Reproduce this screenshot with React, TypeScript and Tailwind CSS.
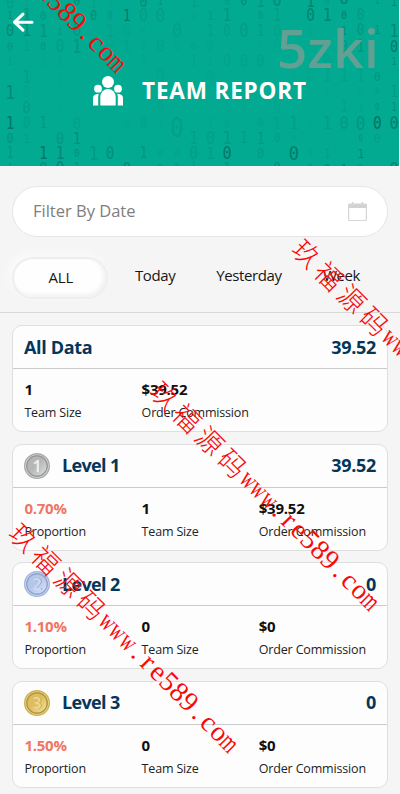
type Digit = [col: number, y: number, char: string, size: number, opacity: number];
type Stat = { value: string; label: string; accent?: boolean };
type Level = { title: string; total: string; medal?: 1 | 2 | 3; stats: Stat[] };

const DIGITS: Digit[] = [
  [0, 2, "0", 16, 0.16], [1, 2, "1", 11, 0.1], [2, 2, "1", 13, 0.05], [3, 2, "1", 14, 0.06], [4, 0, "0", 13, 0.4], [5, 2, "1", 16, 0.1], [6, 3, "1", 12, 0.06], [8, 1, "0", 16, 0.36], [9, 1, "1", 11, 0.25], [11, 1, "1", 17, 0.12],
  [13, 1, "0", 10, 0.2], [14, 0, "0", 14, 0.4], [15, 1, "1", 17, 0.25], [16, 0, "0", 18, 0.4], [18, 1, "1", 17, 0.5], [19, 1, "0", 11, 0.16], [20, -3, "0", 20, 0.5], [22, 1, "1", 9, 0.3], [23, 1, "1", 13, 0.4],
  [0, 15, "1", 11, 0.3], [1, 15, "1", 18, 0.3], [2, 15, "0", 13, 0.25], [3, 15, "1", 14, 0.25], [5, 15, "0", 14, 0.36], [6, 15, "0", 10, 0.22], [7, 15, "1", 16, 0.6], [8, 15, "0", 18, 0.16], [9, 15, "0", 20, 0.15], [11, 15, "0", 11, 0.05],
  [12, 15, "1", 13, 0.15], [13, 15, "1", 18, 0.25], [15, 15, "0", 10, 0.27], [16, 15, "1", 18, 0.14], [18, 15, "0", 17, 0.5], [19, 15, "1", 18, 0.5], [20, 15, "0", 11, 0.6], [21, 15, "0", 15, 0.2],
  [0, 30, "0", 16, 0.43], [1, 30, "1", 18, 0.38], [2, 31, "1", 17, 0.28], [3, 31, "1", 11, 0.2], [4, 30, "0", 18, 0.2], [6, 31, "1", 17, 0.1], [7, 31, "0", 15, 0.07], [8, 31, "0", 8, 0.08], [10, 30, "0", 19, 0.12],
  [12, 31, "1", 15, 0.1], [13, 31, "0", 15, 0.12], [14, 30, "0", 19, 0.15], [15, 31, "1", 15, 0.15], [16, 31, "0", 15, 0.1], [18, 31, "1", 9, 0.1], [20, 31, "1", 12, 0.35], [21, 30, "0", 15, 0.25], [22, 30, "1", 12, 0.35], [23, 31, "1", 18, 0.45],
  [0, 46, "0", 13, 0.22], [1, 46, "1", 14, 0.1], [2, 46, "0", 11, 0.28], [3, 46, "0", 17, 0.14], [4, 46, "1", 19, 0.24], [6, 45, "0", 15, 0.05], [7, 46, "1", 16, 0.08], [8, 46, "0", 10, 0.09], [9, 46, "0", 18, 0.1], [10, 46, "0", 10, 0.08], [11, 46, "0", 13, 0.08],
  [12, 46, "0", 16, 0.06], [15, 45, "0", 9, 0.05], [16, 45, "0", 17, 0.05], [20, 46, "0", 16, 0.2], [21, 46, "1", 18, 0.25], [23, 46, "0", 16, 0.6],
  [0, 62, "1", 9, 0.15], [2, 61, "1", 10, 0.07], [3, 61, "1", 11, 0.07], [8, 61, "1", 15, 0.05], [11, 61, "1", 15, 0.06], [12, 62, "1", 9, 0.1], [13, 61, "0", 15, 0.1], [14, 61, "0", 17, 0.09], [15, 61, "0", 17, 0.1], [19, 61, "0", 17, 0.08], [21, 61, "0", 12, 0.06], [23, 61, "1", 11, 0.35],
  [1, 77, "1", 18, 0.14], [3, 80, "1", 15, 0.03], [9, 76, "0", 17, 0.05], [12, 75, "0", 16, 0.03], [17, 76, "1", 12, 0.05], [18, 76, "0", 15, 0.06], [19, 76, "1", 15, 0.1], [20, 76, "1", 15, 0.12], [21, 76, "1", 15, 0.12], [22, 76, "0", 13, 0.28],
  [0, 92, "1", 19, 0.42], [1, 92, "0", 15, 0.06], [19, 92, "1", 13, 0.03], [21, 91, "0", 9, 0.05], [22, 91, "0", 9, 0.12], [23, 91, "1", 16, 0.17],
  [1, 107, "0", 16, 0.18], [3, 107, "0", 9, 0.04], [5, 107, "0", 15, 0.04], [9, 107, "0", 16, 0.06], [13, 107, "1", 15, 0.05], [14, 107, "0", 10, 0.03], [16, 107, "0", 17, 0.06], [20, 107, "1", 15, 0.1], [21, 107, "1", 13, 0.07], [22, 107, "0", 9, 0.3], [23, 107, "1", 12, 0.3],
  [0, 123, "1", 17, 0.7], [1, 123, "0", 15, 0.12], [2, 123, "1", 15, 0.23], [4, 123, "0", 16, 0.12], [7, 123, "0", 13, 0.05], [8, 123, "0", 15, 0.09], [9, 123, "1", 9, 0.06], [10, 128, "0", 26, 0.13],
  [12, 122, "1", 12, 0.05], [13, 123, "0", 13, 0.08], [15, 123, "0", 12, 0.11], [16, 123, "1", 16, 0.1], [17, 123, "1", 18, 0.15], [18, 123, "1", 8, 0.05], [19, 123, "1", 17, 0.16], [20, 123, "0", 18, 0.2], [21, 123, "0", 19, 0.27], [22, 123, "0", 17, 0.75], [23, 123, "0", 18, 0.55],
  [0, 138, "0", 14, 0.3], [1, 138, "1", 13, 0.13], [3, 138, "0", 16, 0.22], [4, 138, "1", 16, 0.35], [6, 137, "1", 8, 0.04], [11, 138, "1", 17, 0.15],
  [12, 138, "0", 17, 0.13], [13, 138, "1", 18, 0.22], [14, 138, "1", 15, 0.15], [15, 138, "1", 16, 0.2], [16, 138, "0", 12, 0.18], [17, 138, "0", 9, 0.07], [21, 138, "0", 9, 0.3], [22, 138, "0", 13, 0.14],
  [0, 153, "1", 15, 0.22], [2, 153, "1", 17, 0.65], [3, 153, "1", 17, 0.45], [4, 153, "0", 11, 0.33], [5, 153, "1", 19, 0.2], [6, 153, "0", 17, 0.35], [8, 153, "1", 15, 0.3], [9, 153, "0", 8, 0.14], [10, 153, "0", 9, 0.12], [11, 153, "0", 17, 0.17],
  [12, 153, "1", 16, 0.13], [13, 153, "0", 18, 0.65], [15, 153, "0", 14, 0.17], [17, 153, "0", 20, 0.6], [18, 153, "1", 9, 0.1], [19, 153, "1", 14, 0.12], [21, 153, "1", 13, 0.45],
  [0, 167, "1", 9, 0.3], [2, 168, "0", 16, 0.4], [3, 168, "0", 17, 0.5], [4, 168, "1", 16, 0.25], [7, 168, "0", 16, 0.5], [9, 168, "0", 13, 0.25], [10, 168, "1", 14, 0.2], [11, 168, "1", 15, 0.15],
  [13, 168, "1", 16, 0.3], [16, 169, "0", 15, 0.4], [18, 168, "1", 11, 0.3], [19, 168, "0", 13, 0.45], [20, 168, "1", 13, 0.5], [21, 168, "0", 11, 0.3], [23, 169, "0", 19, 0.5],
];

const LEVELS: Level[] = [
  {
    title: "All Data",
    total: "39.52",
    stats: [
      { value: "1", label: "Team Size" },
      { value: "$39.52", label: "Order Commission" },
    ],
  },
  {
    title: "Level 1",
    total: "39.52",
    medal: 1,
    stats: [
      { value: "0.70%", label: "Proportion", accent: true },
      { value: "1", label: "Team Size" },
      { value: "$39.52", label: "Order Commission" },
    ],
  },
  {
    title: "Level 2",
    total: "0",
    medal: 2,
    stats: [
      { value: "1.10%", label: "Proportion", accent: true },
      { value: "0", label: "Team Size" },
      { value: "$0", label: "Order Commission" },
    ],
  },
  {
    title: "Level 3",
    total: "0",
    medal: 3,
    stats: [
      { value: "1.50%", label: "Proportion", accent: true },
      { value: "0", label: "Team Size" },
      { value: "$0", label: "Order Commission" },
    ],
  },
];

const MEDALS = {
  1: { rim: "#aaaaaa", light: "#e2e2e2", dark: "#b6b6b6", edge: "#999999", text: "#ececec", shade: "#a2a2a2" },
  2: { rim: "#a3b5da", light: "#dbe5fa", dark: "#b6c6e8", edge: "#8ea3cf", text: "#cdd9f1", shade: "#7188bb" },
  3: { rim: "#cfae4e", light: "#f3e3a2", dark: "#dcbd62", edge: "#b3953d", text: "#ecd78d", shade: "#ac8b35" },
};

const WATERMARKS = [
  { left: -88, top: -143 },
  { left: 307, top: 253 },
  { left: 165, top: 395 },
  { left: 24, top: 537 },
];

function BinaryRain() {
  return (
    <svg className="absolute inset-0" width="399" height="166" aria-hidden="true">
      {DIGITS.map(([col, y, char, size, opacity]) => (
        <text
          key={`${col}-${y}`}
          transform={`translate(${10 + col * 16.7} ${y + size * 0.36}) scale(0.85 1)`}
          fontSize={size}
          opacity={opacity * 0.8}
          textAnchor="middle"
          fontFamily="'DejaVu Sans Mono', monospace"
          fill="#044c43"
        >
          {char}
        </text>
      ))}
    </svg>
  );
}

function TeamIcon() {
  return (
    <svg width="30" height="30" viewBox="0 0 30 30" fill="#fff">
      <circle cx="15" cy="6" r="6" />
      <circle cx="5" cy="12.7" r="3.9" />
      <circle cx="25" cy="12.7" r="3.9" />
      <path d="M7.3 29.5V20.8a7.7 7.7 0 0 1 15.4 0v8.7z" />
      <path d="M0 29.5V22q0-4 5.8-4.3Q5.3 19 5.2 21v8.5z" />
      <path d="M30 29.5V22q0-4-5.8-4.3.5 1.3.6 3.3v8.5z" />
    </svg>
  );
}

function Medal({ level }: { level: 1 | 2 | 3 }) {
  const m = MEDALS[level];
  return (
    <svg width="26" height="26" viewBox="0 0 26 26" className="mr-3 shrink-0">
      <defs>
        <linearGradient id={`medal${level}`} x1="0" y1="0" x2="1" y2="1">
          <stop offset="0%" stopColor={m.dark} />
          <stop offset="45%" stopColor={m.dark} />
          <stop offset="100%" stopColor={m.light} />
        </linearGradient>
      </defs>
      <circle cx="13" cy="13" r="12.3" fill={m.light} stroke={m.rim} strokeWidth="1.4" />
      <circle cx="13" cy="13" r="10.3" fill={`url(#medal${level})`} stroke={m.edge} strokeWidth="1.4" />
      <g fontFamily="'Open Sans', sans-serif" fontWeight="700" fontSize="16" textAnchor="middle">
        <text x="13.7" y="19.4" fill={m.shade}>{level}</text>
        <text x="13" y="18.7" fill={m.text}>{level}</text>
      </g>
    </svg>
  );
}

function LevelCard({ level }: { level: Level }) {
  return (
    <section className="h-[107px] shrink-0 rounded-[10px] border border-[#dfdfdf] bg-[#fdfdfd]">
      <div className="flex h-[43px] items-center border-b border-[#c9cacb] px-[11px] text-[18px] font-bold text-[#04365a]">
        {level.medal && <Medal level={level.medal} />}
        <span className={level.medal ? "tracking-[-0.65px]" : "tracking-[-0.35px]"}>{level.title}</span>
        <span className="ml-auto tracking-[-0.3px]">{level.total}</span>
      </div>
      <div className="grid grid-cols-3 pt-[10px] pr-[11px] pl-[11.4px]">
        {level.stats.map((s) => (
          <div key={s.label} className="whitespace-nowrap">
            <div className={`text-[15px] leading-5 font-bold tracking-[-0.25px] ${s.accent ? "text-[#ef7564]" : "text-[#101010]"}`}>{s.value}</div>
            <div className="mt-1 text-[12.5px] leading-5 tracking-[-0.17px] text-[#222]">{s.label}</div>
          </div>
        ))}
      </div>
    </section>
  );
}

function Watermark({ left, top }: { left: number; top: number }) {
  return (
    <div className="pointer-events-none absolute h-0 w-0" style={{ left, top }}>
      <div className="flex h-8 origin-[16px_16px] -translate-x-4 -translate-y-4 rotate-45 items-center leading-8 whitespace-nowrap text-[#fa0808]">
        {[..."玖福源码"].map((c) => (
          <span key={c} className="w-8 shrink-0 text-center font-['Noto_Sans_CJK_SC',sans-serif] text-[27px] font-light">{c}</span>
        ))}
        {[..."www.re589.com"].map((c, i) => (
          <span key={i} className="flex w-[14.3px] shrink-0 justify-center font-['Liberation_Serif',serif] text-[28px]">
            <span className={c === "w" || c === "m" ? "scale-x-[0.68]" : ""}>{c}</span>
          </span>
        ))}
      </div>
    </div>
  );
}

export default function App() {
  return (
    <div className="relative h-[794px] w-[400px] overflow-hidden bg-[#f5f5f5] font-['Open_Sans','Noto_Sans',sans-serif]">
      <header className="relative h-[166px] w-[399px] overflow-hidden bg-[#02aa91]">
        <BinaryRain />
        <svg className="absolute top-[12px] left-[12px]" width="22" height="21" viewBox="0 0 22 21" fill="none" stroke="#fff" strokeWidth="3" strokeLinecap="round" strokeLinejoin="round">
          <path d="M11 2.2 2.5 10.2l8.5 8M2.5 10.2h17.5" />
        </svg>
        <div className="absolute top-[13px] left-[277px] text-[53px] leading-[70px] font-semibold tracking-[0.3px] text-[#62a093]">5zki</div>
        <div className="relative flex items-center gap-[19px] pt-[76px] pl-[93px]">
          <TeamIcon />
          <h1 className="-mt-px text-[22.5px] leading-[30px] font-bold tracking-[0.85px] text-white">TEAM REPORT</h1>
        </div>
      </header>

      <div className="mx-3 mt-5 flex h-[51px] items-center justify-between rounded-full border border-[#e6e6e6] bg-white pr-5 pl-5">
        <span className="text-[16.5px] text-[#7e7e7e]">Filter By Date</span>
        <svg width="19" height="19" viewBox="0 0 19 19">
          <path d="M1.5 1.5H4V0h1.4v1.5h8.2V0H15v1.5h2.5A1.5 1.5 0 0 1 19 3v3H0V3a1.5 1.5 0 0 1 1.5-1.5z" fill="#d2d2d2" />
          <rect x="0.6" y="2.5" width="17.8" height="16" rx="1.3" fill="none" stroke="#d6d6d6" strokeWidth="1.2" />
        </svg>
      </div>

      <nav className="flex h-[76px] border-b border-[#d8d8d8] px-3 pt-[20px] text-[15px] text-[#171717]">
        <div className="flex h-[42px] w-[96px] items-center justify-center rounded-full border-2 border-[#eeeeee] bg-[#fefefe] pb-[2px] pl-[2px] shadow-[inset_-2px_-2px_4px_#efefef,-4px_-4px_8px_#fafafa]">
          <span className="tracking-[-0.1px]">ALL</span>
        </div>
        <div className="flex h-[36px] w-[95px] items-center justify-center tracking-[-0.4px]">Today</div>
        <div className="flex h-[36px] w-[93px] items-center justify-center tracking-[-0.4px]">Yesterday</div>
        <div className="flex h-[36px] w-[93px] items-center justify-center tracking-[-0.4px]">Week</div>
      </nav>

      <main className="flex flex-col gap-[11.67px] px-3 pt-3">
        {LEVELS.map((level) => (
          <LevelCard key={level.title} level={level} />
        ))}
      </main>

      {WATERMARKS.map((w) => (
        <Watermark key={w.left} {...w} />
      ))}
    </div>
  );
}
